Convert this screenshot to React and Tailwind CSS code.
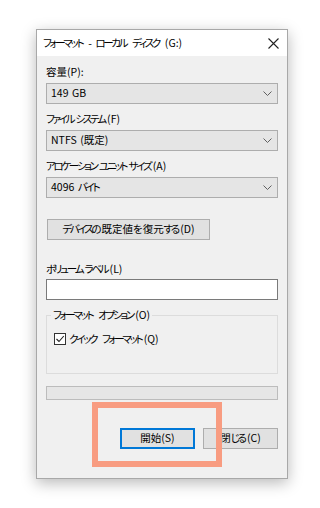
import React from "react";

// the reference uses a narrow UI font for kana; squeeze kana runs to match
const KANA = /([\u3040-\u30ff]+)/;

function T({ s }) {
  return s.split(KANA).map((part, i) =>
    KANA.test(part) ? (
      <React.Fragment key={i}>
        <span className="tracking-[-2.3px]">{part.slice(0, -1)}</span>
        {part.slice(-1)}
      </React.Fragment>
    ) : (
      part
    )
  );
}

function Chevron() {
  return (
    <svg width="9" height="5" viewBox="0 0 9 5" className="shrink-0">
      <path d="M0.5 0.5 L4.5 4.5 L8.5 0.5" fill="none" stroke="#606060" strokeWidth="1" />
    </svg>
  );
}

function Select({ value }) {
  return (
    <div className="mt-[3px] h-[21px] flex items-center justify-between pl-[4px] pr-[5px] bg-[#e5e5e5] border border-[#adadad] text-[10.5px] leading-none text-black">
      <span className="whitespace-nowrap">
        <T s={value} />
      </span>
      <Chevron />
    </div>
  );
}

function Label({ text, className }) {
  return (
    <div className={"h-[16px] flex items-center text-[10.5px] leading-none text-black whitespace-nowrap " + (className || "")}>
      <T s={text} />
    </div>
  );
}

export default function App() {
  return (
    <div className="relative w-[320px] h-[508px] bg-white overflow-hidden font-['Noto_Sans_CJK_JP','Noto_Sans',sans-serif] [font-feature-settings:'palt'] [word-spacing:1.2px]">
      <div className="relative ml-[36px] mt-[29px] w-[252px] h-[450px] bg-[#f0f0f0] border border-[#a8a8a8] shadow-[0_4px_14px_rgba(0,0,0,0.28)] flex flex-col">
        {/* title bar */}
        <div className="h-[26px] bg-white flex items-center justify-between pl-[6px] pr-[8px] shrink-0">
          <span className="text-[10.5px] leading-none text-black whitespace-nowrap">
            <T s="フォーマット - ローカル ディスク (G:)" />
          </span>
          <svg width="11" height="11" viewBox="0 0 11 11">
            <path d="M0.5 0.5 L10.5 10.5 M10.5 0.5 L0.5 10.5" stroke="#222" strokeWidth="1.1" fill="none" />
          </svg>
        </div>

        <div className="px-[9px] flex flex-col">
          <Label className="mt-[8px]" text="容量(P):" />
          <Select value="149 GB" />

          <Label className="mt-[7px]" text="ファイル システム(F)" />
          <Select value="NTFS (既定)" />

          <Label className="mt-[7px]" text="アロケーション ユニット サイズ(A)" />
          <Select value="4096 バイト" />

          <div className="mt-[21px] ml-[1px] w-[163px] h-[21px] flex items-center justify-center bg-[#e1e1e1] border border-[#adadad] text-[10.5px] leading-none text-black whitespace-nowrap">
            <T s="デバイスの既定値を復元する(D)" />
          </div>

          <Label className="mt-[21px]" text="ボリューム ラベル(L)" />
          <div className="mt-[2px] h-[21px] bg-white border border-[#7a7a7a]" />

          {/* group box */}
          <div className="relative mt-[15px] h-[59px] border border-[#dcdcdc]">
            <span className="absolute left-[4px] top-[-9px] px-[2px] bg-[#f0f0f0] text-[10.5px] leading-[16px] text-black whitespace-nowrap">
              <T s="フォーマット オプション(O)" />
            </span>
            <div className="mt-[17px] ml-[7px] flex items-center gap-[3px]">
              <svg width="12" height="12" viewBox="0 0 12 12" className="shrink-0">
                <rect x="0.5" y="0.5" width="11" height="11" fill="#fff" stroke="#333" />
                <path d="M2.5 6 L5 8.5 L9.8 3" fill="none" stroke="#222" strokeWidth="1.1" />
              </svg>
              <span className="text-[10.5px] leading-none text-black whitespace-nowrap">
                <T s="クイック フォーマット(Q)" />
              </span>
            </div>
          </div>

          {/* progress bar */}
          <div className="mt-[12px] h-[14px] bg-[#e6e6e6] border border-[#bcbcbc]" />

          {/* buttons */}
          <div className="mt-[28px] flex justify-end gap-[8px]">
            <div className="w-[75px] h-[21px] flex items-center justify-center bg-[#e1e1e1] border border-[#0078d7] shadow-[inset_0_0_0_1px_#0078d7] text-[10.5px] leading-none text-black">
              <T s="開始(S)" />
            </div>
            <div className="w-[75px] h-[21px] flex items-center justify-center bg-[#e1e1e1] border border-[#adadad] text-[10.5px] leading-none text-black">
              <T s="閉じる(C)" />
            </div>
          </div>
        </div>

        {/* highlight annotation */}
        <div className="absolute left-[55px] top-[372px] w-[130px] h-[65px] border-[6px] border-[#f89c81]" />
      </div>
    </div>
  );
}
